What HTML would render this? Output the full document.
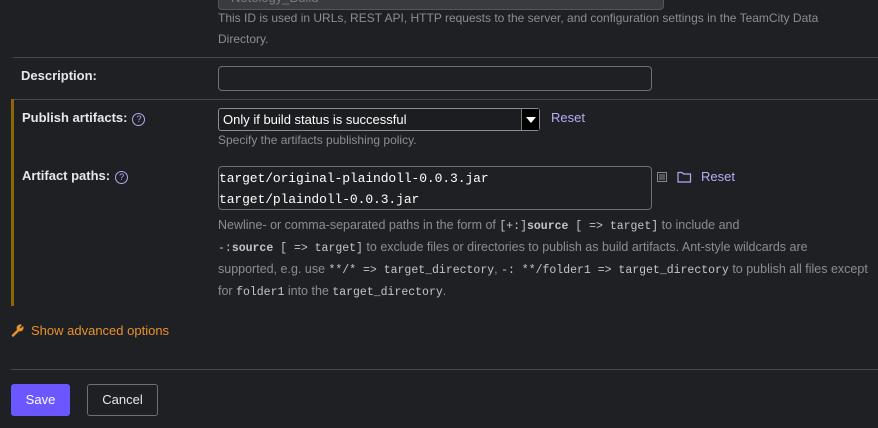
<!DOCTYPE html>
<html><head><style>
body{margin:0;width:878px;height:428px;background:#1f2024;font-family:"Liberation Sans",sans-serif;position:relative;overflow:hidden;color:#dfe1e5}
.a{position:absolute}
.h{color:#8c8d92;font-size:12px;line-height:21px}
.lbl{font-weight:bold;font-size:13px;color:#e6e7ea}
.q{display:inline-block;width:11px;height:11px;border:1.3px solid #b3a9f0;border-radius:50%;font-size:9px;line-height:11px;text-align:center;color:#b3a9f0;font-weight:normal;vertical-align:0px;margin-left:5px}
.m{font-family:"Liberation Mono",monospace;font-size:11.5px;color:#c4c5c9}
.link{color:#b7adf5;font-size:13px}
</style></head><body>
<div class="a" style="left:218px;top:-14px;width:432px;height:22px;background:#3a3b40;border:1px solid #55565b;border-radius:4px;color:#7a7b80;font-size:13px;padding-left:12px;line-height:22px">Netology_Build</div>
<div class="a h" style="left:218px;top:8px;width:640px">This ID is used in URLs, REST API, HTTP requests to the server, and configuration settings in the TeamCity Data Directory.</div>
<div class="a" style="left:13px;top:57px;width:865px;height:1px;background:#46474c"></div>
<div class="a lbl" style="left:21px;top:68px">Description:</div>
<div class="a" style="left:218px;top:66px;width:432px;height:23px;border:1px solid #6f7075;border-radius:4px"></div>
<div class="a" style="left:13px;top:99px;width:865px;height:1px;background:#46474c"></div>
<div class="a" style="left:11px;top:99px;width:3px;height:207px;background:#8a6a00"></div>
<div class="a lbl" style="left:22px;top:110px">Publish artifacts:<span class="q">?</span></div>
<div class="a" style="left:218px;top:108px;border:1px solid #8a8b90;border-radius:3px;background:#1c1d21;font-size:13px;line-height:21px;color:#fff;padding-left:4px;box-sizing:border-box;width:322px;height:23px">Only if build status is successful
<div class="a" style="right:0;top:0;width:17px;height:21px;background:#000;border-left:1px solid #777"><div class="a" style="left:4px;top:8px;border-left:5px solid transparent;border-right:5px solid transparent;border-top:6px solid #fff"></div></div></div>
<div class="a link" style="left:551px;top:110px">Reset</div>
<div class="a h" style="left:218px;top:130px">Specify the artifacts publishing policy.</div>
<div class="a lbl" style="left:22px;top:168px">Artifact paths:<span class="q">?</span></div>
<div class="a" style="left:218px;top:166px;border:1px solid #6f7075;border-radius:4px;font-family:'Liberation Mono',monospace;font-size:13px;line-height:21px;color:#fff;box-sizing:border-box;width:434px;height:44px;padding-top:1px;letter-spacing:-0.1px">target/original-plaindoll-0.0.3.jar<br>target/plaindoll-0.0.3.jar</div>
<svg class="a" style="left:657px;top:172px" width="10" height="10"><rect x="0.5" y="0.5" width="9" height="9" fill="none" stroke="#888" /><path d="M2 3h6M2 5h6M2 7h6" stroke="#888"/></svg>
<svg class="a" style="left:677px;top:171px" width="15" height="12"><path d="M1 1.5h4l1.5 1.5h7v8h-12.5z" fill="none" stroke="#b3a9f0" stroke-width="1.2"/></svg>
<div class="a link" style="left:701px;top:169px">Reset</div>
<div class="a h" style="left:218px;top:215px;white-space:nowrap;line-height:21px;font-size:12.5px;letter-spacing:0">Newline- or comma-separated paths in the form of <span class="m">[+:]<b>source</b> [ =&gt; target]</span> to include and<br><span class="m">-:<b>source</b> [ =&gt; target]</span> to exclude files or directories to publish as build artifacts. Ant-style wildcards are<br>supported, e.g. use <span class="m">**/* =&gt; target_directory</span>, <span class="m">-: **/folder1 =&gt; target_directory</span> to publish all files except<br>for <span class="m">folder1</span> into the <span class="m">target_directory</span>.</div>
<svg class="a" style="left:11px;top:324px" width="13" height="13"><path d="M2 11.5L7 6.5" stroke="#e8912d" stroke-width="2.4" stroke-linecap="round"/><path d="M6 5.5a3.5 3.5 0 0 1 5-4.5l-2.2 2.2 1 1 2.2-2.2a3.5 3.5 0 0 1-4.5 5z" fill="#e8912d"/></svg>
<div class="a" style="left:31px;top:323px;color:#e8912d;font-size:13px">Show advanced options</div>
<div class="a" style="left:11px;top:369px;width:867px;height:1px;background:#46474c"></div>
<div class="a" style="left:11px;top:384px;width:59px;height:32px;background:#6b57ff;border-radius:3px;color:#fff;font-size:13px;line-height:32px;text-align:center">Save</div>
<div class="a" style="left:87px;top:384px;width:69px;height:30px;border:1px solid #6f7075;border-radius:3px;color:#e6e7ea;font-size:13px;line-height:30px;text-align:center">Cancel</div>
</body></html>
